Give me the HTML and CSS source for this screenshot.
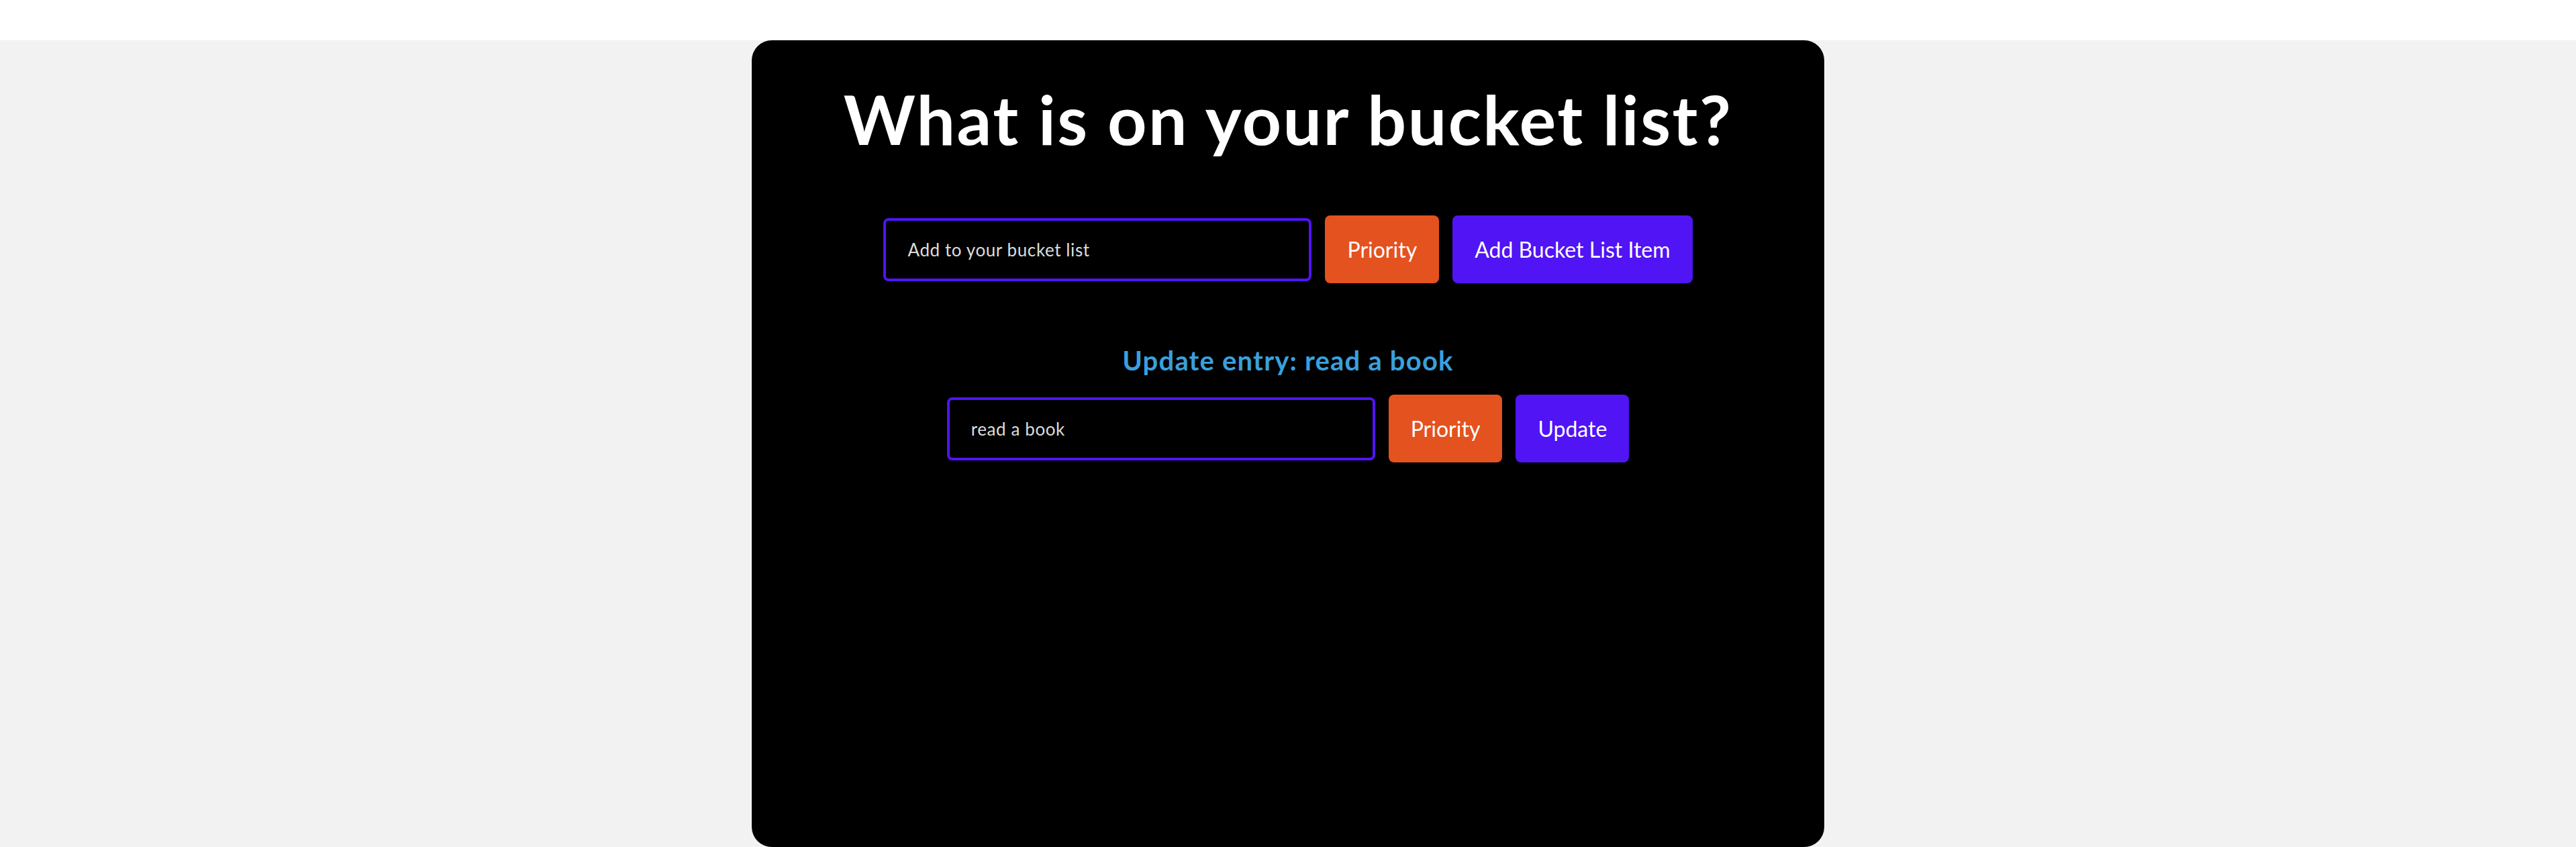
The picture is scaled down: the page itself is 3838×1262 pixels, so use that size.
FILE: index.html
```html
<!DOCTYPE html>
<html lang="en">
<head>
<meta charset="utf-8">
<title>Bucket List</title>
<link rel="stylesheet" href="styles.css">
</head>
<body>
<div class="page">
  <div class="app">
    <div class="card">
      <h1 class="title">What is on your bucket list?</h1>
      <form class="row row-add">
        <input class="field" type="text" placeholder="Add to your bucket list">
        <button type="button" class="btn btn-priority">Priority</button>
        <button type="button" class="btn btn-main">Add Bucket List Item</button>
      </form>
      <h2 class="subtitle">Update entry: read a book</h2>
      <form class="row row-update">
        <input class="field" type="text" value="read a book">
        <button type="button" class="btn btn-priority">Priority</button>
        <button type="button" class="btn btn-main">Update</button>
      </form>
    </div>
  </div>
</div>
</body>
</html>
```

FILE: styles.css
```css
* { box-sizing: border-box; }
html, body {
  margin: 0;
  padding: 0;
  background: #ffffff;
  font-family: "Trebuchet MS", Lato, "Open Sans", sans-serif;
}
.page {
  width: 100%;
  height: 1262px;
  overflow: hidden;
  background: #ffffff;
}
.app {
  margin-top: 60px;
  height: 1202px;
  background: #f2f2f2;
  display: flex;
  justify-content: center;
}
.card {
  width: 1598px;
  height: 1202px;
  background: #000000;
  border-radius: 30px;
  padding-top: 66px;
  display: flex;
  flex-direction: column;
  align-items: center;
}
.title {
  margin: 0;
  font-size: 102px;
  line-height: 1;
  font-weight: 700;
  letter-spacing: 2.5px;
  color: #ffffff;
}
.row {
  margin: 0;
  display: flex;
  align-items: center;
  gap: 20px;
  height: 101px;
}
.row-add { margin-top: 93px; }
.row-update { margin-top: 31px; }
.field {
  width: 638px;
  height: 94px;
  border: 4px solid #5014f5;
  border-radius: 8px;
  background: #000000;
  color: #dddddd;
  padding: 0 32px;
  font-family: inherit;
  font-size: 26px;
  letter-spacing: 0.6px;
  outline: none;
}
.field::placeholder { color: #dddddd; opacity: 1; }
.btn {
  height: 101px;
  padding: 0 33px;
  border: none;
  border-radius: 8px;
  color: #ffffff;
  font-family: inherit;
  font-size: 32px;
  cursor: pointer;
}
.btn-priority { background: #e4521f; }
.btn-main { background: #5014f5; }
.subtitle {
  margin: 95px 0 0;
  font-size: 40px;
  line-height: 1;
  font-weight: 700;
  letter-spacing: 1.2px;
  color: #3aa0dd;
}
```
